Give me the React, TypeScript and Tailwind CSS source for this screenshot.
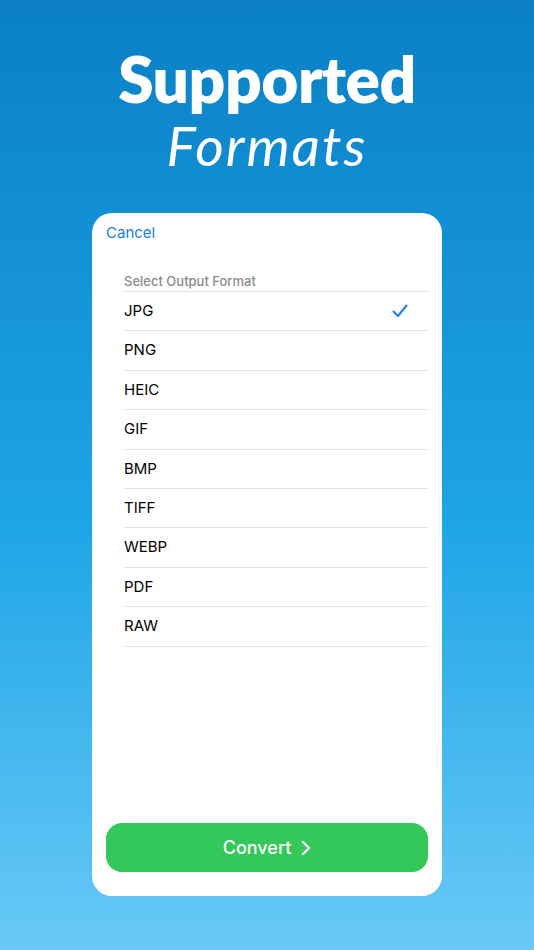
import React from "react";

const formats = ["JPG", "PNG", "HEIC", "GIF", "BMP", "TIFF", "WEBP", "PDF", "RAW"];

export default function App() {
  return (
    <div className="w-[534px] h-[950px] bg-[linear-gradient(180deg,#0a7fc6_0%,#1ea5e6_55%,#68c9f6_100%)] flex flex-col items-center overflow-hidden" style={{ fontFamily: "Inter, 'Noto Sans', sans-serif" }}>
      <div className="flex flex-col items-center text-white mt-[44px]" style={{ fontFamily: "Lato, sans-serif" }}>
        <div className="text-[64px] font-extrabold leading-[70px] tracking-[-0.5px]">Supported</div>
        <div className="text-[55px] italic font-normal leading-[58px] mt-[2px] tracking-[2px]">Formats</div>
      </div>
      <div className="mt-[39px] w-[350px] h-[683px] bg-white rounded-[20px] flex flex-col px-[14px] pb-[24px]">
        <div className="text-[15px] text-[#1a7fe0] pt-[9px] h-[38px]">Cancel</div>
        <div className="pl-[18px] flex flex-col">
          <div className="text-[13px] font-medium text-[#8a8a8e] pt-[20px] pb-0 leading-[20px] border-b border-[#e3e3e6]">Select Output Format</div>
          {formats.map((f, i) => (
            <div key={f} className="h-[39.4px] flex items-center justify-between border-b border-[#e3e3e6] text-[15px] text-black pr-[20px]">
              <span>{f}</span>
              {i === 0 && (
                <svg width="16" height="14" viewBox="0 0 16 14" fill="none">
                  <path d="M1.5 7.5 L6 12 L14.5 1.5" stroke="#1a7fe0" strokeWidth="2" strokeLinecap="round" strokeLinejoin="round" />
                </svg>
              )}
            </div>
          ))}
        </div>
        <div className="flex-1" />
        <div className="h-[49px] rounded-[16px] bg-[#34c759] flex items-center justify-center gap-[10px] text-white text-[18px] font-medium">
          <span>Convert</span>
          <svg width="10" height="16" viewBox="0 0 10 16" fill="none">
            <path d="M2 2 L8 8 L2 14" stroke="white" strokeWidth="2.4" strokeLinecap="round" strokeLinejoin="round" />
          </svg>
        </div>
      </div>
    </div>
  );
}
